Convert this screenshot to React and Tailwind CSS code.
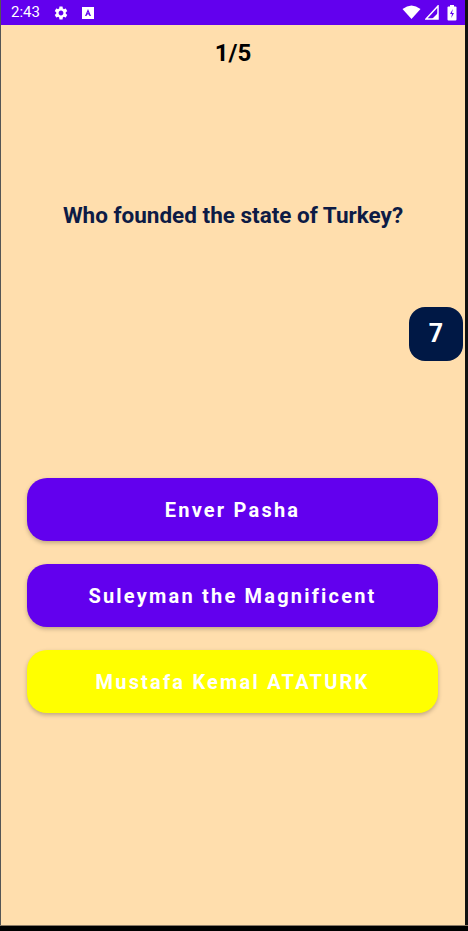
function StatusBar() {
  return (
    <div className="h-[25px] bg-[#6200ee] flex items-center justify-between pl-[10px] pr-[8px] text-white">
      <div className="flex items-center gap-[13px]">
        <span className="text-[15px] leading-none">2:43</span>
        <svg width="16" height="16" viewBox="0 0 24 24" fill="white">
          <path d="M19.14 12.94c.04-.3.06-.61.06-.94 0-.32-.02-.64-.07-.94l2.03-1.58a.49.49 0 0 0 .12-.61l-1.920-3.32a.488.488 0 0 0-.59-.22l-2.39.96c-.5-.38-1.030-.7-1.62-.94l-.36-2.54a.484.484 0 0 0-.48-.41h-3.84c-.24 0-.43.17-.47.41l-.36 2.54c-.59.24-1.130.57-1.62.94l-2.39-.96c-.22-.08-.47 0-.59.22L2.74 8.87c-.12.21-.08.47.12.61l2.03 1.58c-.05.3-.09.63-.09.94s.02.64.07.94l-2.03 1.58a.49.49 0 0 0-.12.61l1.920 3.32c.12.22.37.29.59.22l2.39-.96c.5.38 1.030.7 1.62.94l.36 2.54c.05.24.24.41.48.41h3.84c.24 0 .44-.17.47-.41l.36-2.54c.59-.24 1.130-.56 1.62-.94l2.39.96c.22.08.47 0 .59-.22l1.920-3.32c.12-.22.07-.47-.12-.61l-2.01-1.58zM12 15.6c-1.98 0-3.6-1.62-3.6-3.6s1.62-3.6 3.6-3.6 3.6 1.62 3.6 3.6-1.62 3.6-3.6 3.6z" />
        </svg>
        <svg width="12" height="12" viewBox="0 0 12 12">
          <rect x="0" y="0" width="12" height="12" fill="white" />
          <path d="M6 2 L3 9 H4.5 L5.1 7.5 H6.9 L7.5 9 H9 L6 2 Z M5.5 6.3 L6 5 L6.5 6.3 Z" fill="#6200ee" />
        </svg>
      </div>
      <div className="flex items-center gap-[4px]">
        <svg width="19" height="15" viewBox="0 0 19 15">
          <path d="M9.5 14 L0.5 4 Q9.5 -3 18.5 4 Z" fill="white" />
        </svg>
        <svg width="14" height="15" viewBox="0 0 14 15">
          <path d="M13 1 V14 H1 Z" fill="none" stroke="white" strokeWidth="1.5" strokeLinejoin="miter" />
          <path d="M13 8 V14 H7 Z" fill="white" />
        </svg>
        <svg width="10" height="16" viewBox="0 0 10 16" className="ml-[4px]">
          <rect x="3" y="0" width="4" height="2" fill="white" />
          <rect x="0.5" y="1.5" width="9" height="14" rx="1" fill="white" />
          <path d="M5.8 4 L3 9 H5 L4.2 13 L7 8 H5 Z" fill="#6200ee" />
        </svg>
      </div>
    </div>
  )
}

function Answer({ text, bg }) {
  return (
    <button
      className={`w-full h-[63px] rounded-[20px] ${bg} shadow-[0_2px_4px_rgba(0,0,0,0.25)]
                  text-white text-[20px] font-bold tracking-[0.11em]`}
    >
      {text}
    </button>
  )
}

export default function App() {
  return (
    <div className="w-[468px] h-[931px] bg-black flex flex-col font-['Roboto',sans-serif]">
      <div className="flex flex-1 min-h-0">
        <div className="w-[1px] bg-[#555]" />
        <div className="w-[464px] flex flex-col bg-[#ffdead]">
          <StatusBar />
          <div className="text-center text-[24px] font-bold text-black mt-[14px] leading-[28px]">
            1/5
          </div>
          <div className="text-center text-[22.5px] font-bold text-[#0d1b45] mt-[135px] leading-[26px]">
            Who founded the state of Turkey?
          </div>
          <div className="flex justify-end mt-[79px]">
            <div className="w-[54px] h-[54px] mr-[2px] rounded-[16px] bg-[#001845] text-white text-[25px] font-bold flex items-center justify-center">
              7
            </div>
          </div>
          <div className="flex flex-col gap-[23px] ml-[26px] mr-[27px] mt-[117px]">
            <Answer text="Enver Pasha" bg="bg-[#6200ee]" />
            <Answer text="Suleyman the Magnificent" bg="bg-[#6200ee]" />
            <Answer text="Mustafa Kemal ATATURK" bg="bg-[#ffff00]" />
          </div>
        </div>
        <div className="flex-1 bg-[#111]" />
      </div>
      <div className="h-[1px] bg-[#8a7a66]" />
      <div className="h-[5px] bg-black" />
    </div>
  )
}
